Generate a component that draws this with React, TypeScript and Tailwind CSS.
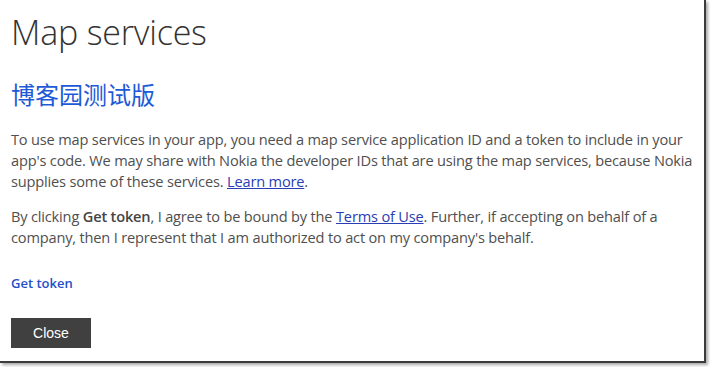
export default function App() {
  return (
    <div className="w-[710px] h-[367px] bg-white overflow-hidden">
      <div className="w-[706px] h-[363px] bg-white border-r-2 border-b-2 border-[#3c3c3c] shadow-[2px_2px_3px_rgba(0,0,0,0.35)] pl-[11px] pt-[8px] font-['Open_Sans','Noto_Sans_CJK_SC',sans-serif] text-[#4f4f4f]">
        {/* Title */}
        <h1 className="text-[34px] leading-[48px] font-light text-[#333] tracking-[-0.2px]">
          Map services
        </h1>

        {/* App name */}
        <h2 className="mt-[23px] text-[24px] leading-[30px] text-[#1e5ad6] font-['Noto_Sans_CJK_SC',sans-serif]">
          博客园测试版
        </h2>

        <p className="mt-[20px] text-[14.6px] leading-[21px] tracking-[-0.18px]">
          To use map services in your app, you need a map service application ID and a token to include in your
          <br />
          app&apos;s code. We may share with Nokia the developer IDs that are using the map services, because Nokia
          <br />
          supplies some of these services.{' '}
          <a href="#" className="text-[#2a3db5] underline">
            Learn more
          </a>
          .
        </p>

        <p className="mt-[14px] text-[14.6px] leading-[21px] tracking-[-0.18px]">
          By clicking <span className="font-semibold text-[#444]">Get token</span>, I agree to be bound by the{' '}
          <a href="#" className="text-[#2a3db5] underline">
            Terms of Use
          </a>
          . Further, if accepting on behalf of a
          <br />
          company, then I represent that I am authorized to act on my company&apos;s behalf.
        </p>

        <div className="mt-[22px]">
          <a href="#" className="text-[13px] leading-[20px] font-semibold text-[#2350c8]">
            Get token
          </a>
        </div>

        <button className="mt-[24px] w-[80px] h-[30px] bg-[#404040] text-white text-[14px] font-['Liberation_Sans',sans-serif]">
          Close
        </button>
      </div>
    </div>
  );
}
